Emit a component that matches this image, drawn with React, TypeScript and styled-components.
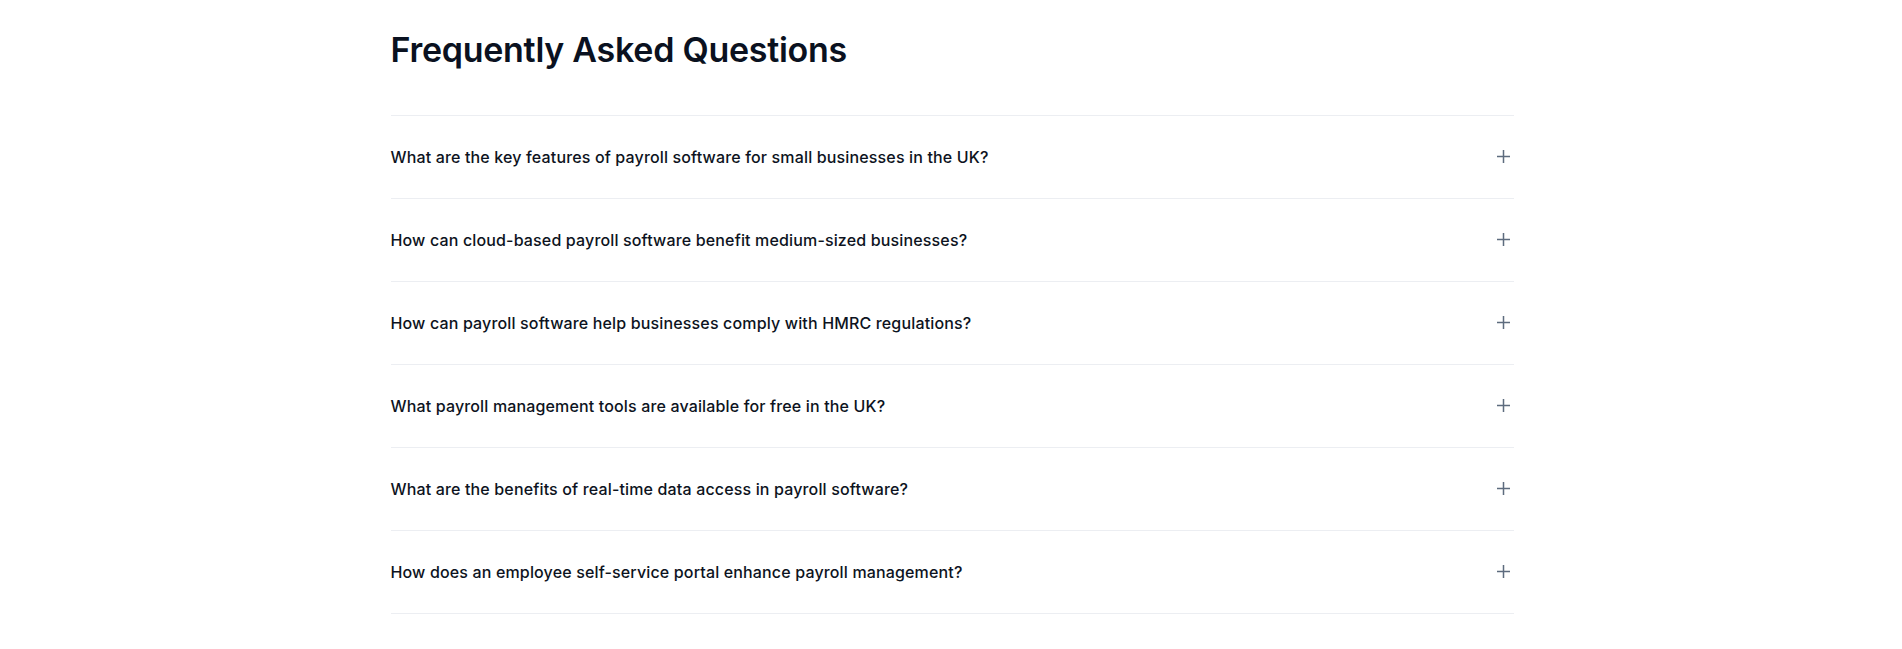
import React from "react";
import styled, { createGlobalStyle } from "styled-components";

const GlobalStyle = createGlobalStyle`
  * { box-sizing: border-box; }
  html, body { margin: 0; padding: 0; background: #ffffff; }
  body {
    font-family: Inter, "Noto Sans", "Liberation Sans", sans-serif;
    -webkit-font-smoothing: antialiased;
  }
`;

const Section = styled.section`
  width: 100%;
  padding: 29px 0 40px;
`;

const Container = styled.div`
  width: 1123px;
  margin: 0 auto;
  transform: translateX(1px);
`;

const Title = styled.h2`
  margin: 0 0 45px;
  font-size: 34px;
  line-height: normal;
  font-weight: 600;
  letter-spacing: -0.27px;
  color: #0a1120;
`;

const List = styled.div`
  display: flex;
  flex-direction: column;
  border-bottom: 1px solid #eceef2;
`;

const Item = styled.div`
  border-top: 1px solid #eceef2;
`;

const Trigger = styled.button`
  width: 100%;
  display: flex;
  align-items: center;
  justify-content: space-between;
  padding: 29px 4px 29px 0;
  background: none;
  border: 0;
  cursor: pointer;
  text-align: left;
  font-family: inherit;
  font-size: 16px;
  line-height: 24px;
  font-weight: 500;
  letter-spacing: 0.15px;
  color: #0d1321;
`;

const PlusIcon = styled.svg`
  width: 13px;
  height: 13px;
  flex: none;
  margin-top: -2px;
`;

const Plus = () => (
  <PlusIcon viewBox="0 0 13 13" fill="none" stroke="#5d6b7e" strokeWidth="1.5">
    <path d="M6.5 0v13M0 6.5h13" />
  </PlusIcon>
);

const questions = [
  "What are the key features of payroll software for small businesses in the UK?",
  "How can cloud-based payroll software benefit medium-sized businesses?",
  "How can payroll software help businesses comply with HMRC regulations?",
  "What payroll management tools are available for free in the UK?",
  "What are the benefits of real-time data access in payroll software?",
  "How does an employee self-service portal enhance payroll management?",
];

export default function App() {
  return (
    <>
      <GlobalStyle />
      <Section>
        <Container>
          <Title>Frequently Asked Questions</Title>
          <List>
            {questions.map((q) => (
              <Item key={q}>
                <Trigger type="button">
                  <span>{q}</span>
                  <Plus />
                </Trigger>
              </Item>
            ))}
          </List>
        </Container>
      </Section>
    </>
  );
}
